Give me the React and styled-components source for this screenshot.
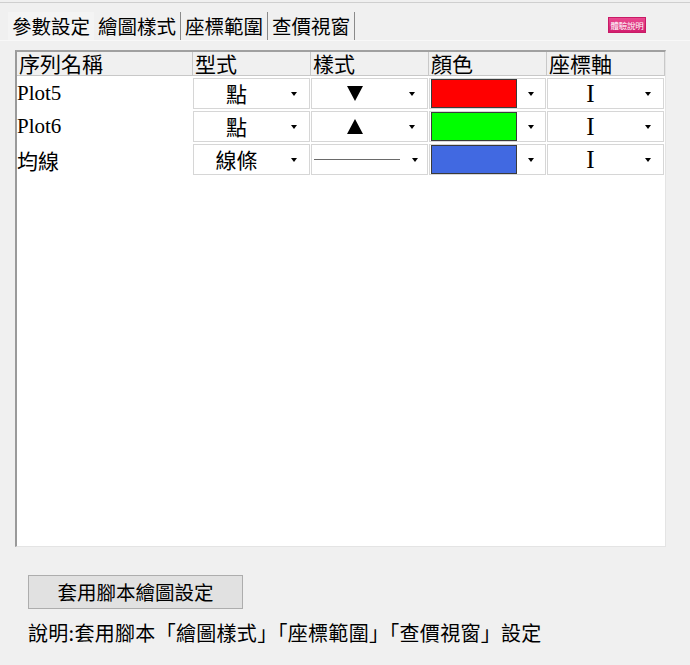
import React from "react";
import styled, { createGlobalStyle } from "styled-components";

const Global = createGlobalStyle`
  html, body { margin: 0; padding: 0; background: #f0f0f0; }
  body { font-family: "Noto Sans CJK TC", "Noto Sans", sans-serif; color: #000; }
  * { box-sizing: border-box; }
`;

const Root = styled.div`
  width: 690px;
  height: 665px;
  background: #f0f0f0;
  padding-top: 2px;
  display: flex;
  flex-direction: column;
  overflow: hidden;
`;

const TopRule = styled.div`
  height: 1px;
  background: #cfcfcf;
`;

const TabBar = styled.div`
  height: 37px;
  display: flex;
  align-items: flex-end;
  padding-left: 8px;
`;

const Tab = styled.div`
  width: ${(p) => (p.$first ? 86 : 87)}px;
  height: 28px;
  padding-left: 4px;
  display: flex;
  align-items: center;
  font-size: 19.5px;
  line-height: 1;
  white-space: nowrap;
  background: ${(p) => (p.$first ? "#f4f4f4" : "transparent")};
  border-right: ${(p) => (p.$first ? "none" : "1px solid #8a8a8a")};
`;

const Spacer = styled.div`
  flex: 1;
`;

const HelpBadge = styled.div`
  align-self: flex-start;
  margin-top: 14px;
  margin-right: 44px;
  width: 38px;
  height: 16px;
  background: linear-gradient(#ea4a90, #d21d6e);
  border: 1px solid #c81a66;
  color: #fff;
  font-size: 8.5px;
  line-height: 14px;
  text-align: center;
  white-space: nowrap;
  letter-spacing: -0.2px;
`;

const Panel = styled.div`
  padding: 9px 0 0 15px;
  border-top: 1px solid #f8f8f8;
`;

const Table = styled.div`
  width: 651px;
  height: 497px;
  background: #fff;
  border-top: 2px solid #a0a0a0;
  border-left: 2px solid #9a9a9a;
  border-right: 1px solid #e4e4e4;
  border-bottom: 1px solid #e4e4e4;
  display: flex;
  flex-direction: column;
`;

const cols = "176px 118px 118px 118px 118px";

const HeaderRow = styled.div`
  display: grid;
  grid-template-columns: ${cols};
  height: 24px;
  background: #f0f0f0;
  border-bottom: 1px solid #c8c8c8;
`;

const HeaderCell = styled.div`
  border-right: 1px solid #c8c8c8;
  padding-left: 2px;
  display: flex;
  align-items: center;
  font-size: 21px;
  line-height: 1;
  white-space: nowrap;
`;

const Body = styled.div`
  padding-top: 1px;
`;

const Row = styled.div`
  display: grid;
  grid-template-columns: ${cols};
  height: 33px;
`;

const Label = styled.div`
  display: flex;
  align-items: center;
  font-family: "Liberation Serif", "Noto Sans CJK TC", serif;
  font-size: 21px;
  white-space: nowrap;
`;

const CjkLabel = styled.span`
  font-family: "Noto Sans CJK TC", sans-serif;
  font-size: 21px;
`;

const DropCell = styled.div`
  margin: 1px 1px 1px 0;
  height: 31px;
  border: 1px solid #d6d6d6;
  background: #fff;
  display: grid;
  grid-template-columns: 1fr 30px;
  align-items: center;
`;

const ColorCell = styled.div`
  margin: 1px 1px 1px 0;
  height: 31px;
  border: 1px solid #d6d6d6;
  background: #fff;
  display: flex;
  align-items: stretch;
`;

const Swatch = styled.div`
  width: 86px;
  margin-left: 1px;
  background: ${(p) => p.$color};
  border: 1px solid #3a3a3a;
`;

const Value = styled.div`
  display: flex;
  align-items: center;
  justify-content: center;
  font-size: 21px;
  line-height: 1;
  white-space: nowrap;
`;

const AxisGlyph = styled.span`
  font-family: "Liberation Serif", serif;
  font-size: 25px;
  line-height: 1;
`;

const LineSample = styled.div`
  align-self: center;
  justify-self: start;
  margin-left: 2px;
  width: 86px;
  height: 1px;
  background: #6a6a6a;
`;

const ArrowBox = styled.div`
  flex: 1;
  display: flex;
  align-items: center;
  justify-content: center;
`;

const Arrow = styled.span`
  width: 0;
  height: 0;
  border-left: 3.5px solid transparent;
  border-right: 3.5px solid transparent;
  border-top: 4px solid #000;
`;

const Footer = styled.div`
  padding: 28px 0 0 28px;
`;

const ApplyButton = styled.button`
  width: 215px;
  height: 34px;
  border: 1px solid #adadad;
  background: #e1e1e1;
  font-family: "Noto Sans CJK TC", sans-serif;
  font-size: 19.5px;
  line-height: 1;
  color: #000;
  padding: 0;
  cursor: pointer;
`;

const Note = styled.div`
  margin-top: 12px;
  font-size: 20px;
  letter-spacing: 0.3px;
  line-height: 24px;
  white-space: nowrap;
`;

const Triangle = ({ up }) => (
  <svg width="16" height="15" viewBox="0 0 16 15">
    {up ? <polygon points="8,0 16,15 0,15" fill="#000" /> : <polygon points="0,0 16,0 8,15" fill="#000" />}
  </svg>
);

const Drop = ({ children }) => (
  <DropCell>
    {children}
    <ArrowBox>
      <Arrow />
    </ArrowBox>
  </DropCell>
);

const rows = [
  { name: "Plot5", cjk: false, type: "點", style: "down", color: "#ff0000" },
  { name: "Plot6", cjk: false, type: "點", style: "up", color: "#00ff00" },
  { name: "均線", cjk: true, type: "線條", style: "line", color: "#4169e1" },
];

export default function App() {
  return (
    <Root>
      <Global />
      <TopRule />
      <TabBar>
        <Tab $first>參數設定</Tab>
        <Tab>繪圖樣式</Tab>
        <Tab>座標範圍</Tab>
        <Tab>查價視窗</Tab>
        <Spacer />
        <HelpBadge>體驗說明</HelpBadge>
      </TabBar>
      <Panel>
        <Table>
          <HeaderRow>
            <HeaderCell>序列名稱</HeaderCell>
            <HeaderCell>型式</HeaderCell>
            <HeaderCell>樣式</HeaderCell>
            <HeaderCell>顏色</HeaderCell>
            <HeaderCell>座標軸</HeaderCell>
          </HeaderRow>
          <Body>
            {rows.map((r) => (
              <Row key={r.name}>
                <Label>{r.cjk ? <CjkLabel>{r.name}</CjkLabel> : r.name}</Label>
                <Drop>
                  <Value>{r.type}</Value>
                </Drop>
                <Drop>
                  {r.style === "line" ? (
                    <LineSample />
                  ) : (
                    <Value>
                      <Triangle up={r.style === "up"} />
                    </Value>
                  )}
                </Drop>
                <ColorCell>
                  <Swatch $color={r.color} />
                  <ArrowBox>
                    <Arrow />
                  </ArrowBox>
                </ColorCell>
                <Drop>
                  <Value>
                    <AxisGlyph>I</AxisGlyph>
                  </Value>
                </Drop>
              </Row>
            ))}
          </Body>
        </Table>
      </Panel>
      <Footer>
        <ApplyButton>套用腳本繪圖設定</ApplyButton>
        <Note>說明:套用腳本「繪圖樣式」「座標範圍」「查價視窗」設定</Note>
      </Footer>
    </Root>
  );
}
